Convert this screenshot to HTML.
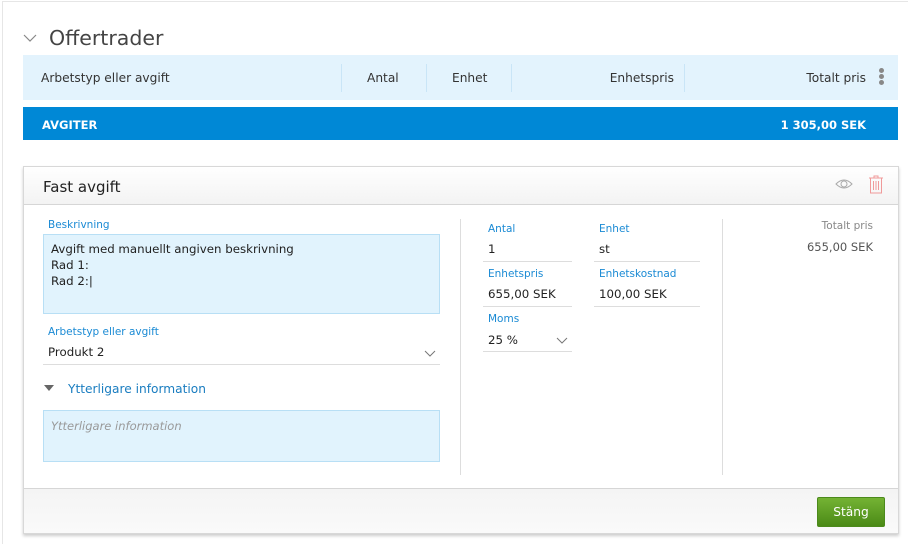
<!DOCTYPE html>
<html><head><meta charset="utf-8"><style>
*{box-sizing:border-box;margin:0;padding:0}
body{width:908px;height:544px;background:#fff;font-family:"DejaVu Sans","Liberation Sans",sans-serif;color:#333;position:relative;overflow:hidden;font-size:12.2px}
.a{position:absolute;white-space:nowrap}
.lbl{font-size:10.5px;color:#1a8ad4;line-height:13px}
.val{font-size:11.8px;color:#222;line-height:16px}
.ln{position:absolute;height:1px;background:#ddd}
</style></head><body>
<div class="a" style="left:2px;top:1px;width:906px;height:543px;border:1px solid #e6e6e6;border-right:none;border-bottom:none"></div>
<svg class="a" style="left:23px;top:33px" width="14" height="10"><path d="M1 2 L7 8 L13 2" fill="none" stroke="#888" stroke-width="1.2"/></svg>
<div class="a" style="left:49px;top:23px;font-size:20.5px;color:#444;line-height:30px">Offertrader</div>
<div class="a" style="left:23px;top:55px;width:875px;height:45px;background:#e3f3fd"></div>
<div class="a" style="left:341px;top:64px;width:1px;height:28px;background:#c9e5f7"></div>
<div class="a" style="left:426px;top:64px;width:1px;height:28px;background:#c9e5f7"></div>
<div class="a" style="left:511px;top:64px;width:1px;height:28px;background:#c9e5f7"></div>
<div class="a" style="left:684px;top:64px;width:1px;height:28px;background:#c9e5f7"></div>
<div class="a" style="left:41px;top:70px;line-height:16px">Arbetstyp eller avgift</div>
<div class="a" style="left:367px;top:70px;line-height:16px">Antal</div>
<div class="a" style="left:452px;top:70px;line-height:16px">Enhet</div>
<div class="a" style="right:234px;top:70px;line-height:16px">Enhetspris</div>
<div class="a" style="right:42px;top:70px;line-height:16px">Totalt pris</div>
<div class="a" style="left:879px;top:68px;width:5px;height:5px;border-radius:50%;background:#888;box-shadow:0 6px 0 #888,0 12px 0 #888"></div>
<div class="a" style="left:23px;top:107px;width:875px;height:33px;background:#0088d6"></div>
<div class="a" style="left:42px;top:117px;color:#fff;font-weight:bold;font-size:11.5px;line-height:16px">AVGITER</div>
<div class="a" style="right:42px;top:117px;color:#fff;font-weight:bold;font-size:11.5px;line-height:16px">1 305,00 SEK</div>
<div class="a" style="left:23px;top:166px;width:876px;height:368px;border:1px solid #d8d8d8;box-shadow:0 2px 3px rgba(0,0,0,.2);background:#fff"></div>
<div class="a" style="left:24px;top:167px;width:874px;height:38px;background:linear-gradient(#fff,#f3f3f3);border-bottom:1px solid #d6d6d6"></div>
<div class="a" style="left:43px;top:177px;font-size:15px;color:#222;line-height:20px">Fast avgift</div>
<svg class="a" style="left:835px;top:177px" width="18" height="14"><path d="M1 7 Q9 -1 17 7 Q9 15 1 7Z" fill="none" stroke="#aaa" stroke-width="1"/><circle cx="9" cy="7" r="3" fill="none" stroke="#aaa"/></svg>
<svg class="a" style="left:868px;top:175px" width="16" height="19"><path d="M1 3H15M6 3V1H10V3M2.5 3V18H13.5V3M5.5 6V15M8 6V15M10.5 6V15" fill="none" stroke="#f09a9a" stroke-width="1"/></svg>
<div class="a lbl" style="left:48px;top:219px">Beskrivning</div>
<div class="a" style="left:43px;top:234px;width:397px;height:80px;background:#e1f3fd;border:1px solid #b8dff5"></div>
<div class="a val" style="left:51px;top:241px;line-height:16px">Avgift med manuellt angiven beskrivning<br>Rad 1:<br>Rad 2:|</div>
<div class="a lbl" style="left:48px;top:326px">Arbetstyp eller avgift</div>
<div class="a val" style="left:48px;top:344px">Produkt 2</div>
<svg class="a" style="left:424px;top:350px" width="12" height="8"><path d="M1 1L6 6L11 1" fill="none" stroke="#777"/></svg>
<div class="ln" style="left:43px;top:364px;width:397px"></div>
<svg class="a" style="left:44px;top:385px" width="10" height="7"><path d="M0 0H10L5 6Z" fill="#666"/></svg>
<div class="a" style="left:68px;top:381px;color:#1a7dc0;line-height:16px">Ytterligare information</div>
<div class="a" style="left:43px;top:410px;width:397px;height:52px;background:#e1f3fd;border:1px solid #b8dff5"></div>
<div class="a" style="left:51px;top:419px;font-size:11.5px;color:#999;font-style:italic;line-height:14px">Ytterligare information</div>
<div class="a" style="left:460px;top:219px;width:1px;height:256px;background:#ddd"></div>
<div class="a" style="left:722px;top:219px;width:1px;height:256px;background:#ddd"></div>
<div class="a lbl" style="left:488px;top:223px">Antal</div>
<div class="a val" style="left:488px;top:241px">1</div>
<div class="ln" style="left:483px;top:261px;width:89px"></div>
<div class="a lbl" style="left:599px;top:223px">Enhet</div>
<div class="a val" style="left:599px;top:241px">st</div>
<div class="ln" style="left:594px;top:261px;width:106px"></div>
<div class="a lbl" style="left:488px;top:268px">Enhetspris</div>
<div class="a val" style="left:488px;top:286px">655,00 SEK</div>
<div class="ln" style="left:483px;top:306px;width:89px"></div>
<div class="a lbl" style="left:599px;top:268px">Enhetskostnad</div>
<div class="a val" style="left:599px;top:286px">100,00 SEK</div>
<div class="ln" style="left:594px;top:306px;width:106px"></div>
<div class="a lbl" style="left:488px;top:313px">Moms</div>
<div class="a val" style="left:488px;top:332px">25 %</div>
<svg class="a" style="left:556px;top:337px" width="12" height="8"><path d="M1 1L6 6L11 1" fill="none" stroke="#777"/></svg>
<div class="ln" style="left:483px;top:351px;width:89px"></div>
<div class="a" style="right:35px;top:220px;font-size:10.5px;color:#888;line-height:13px">Totalt pris</div>
<div class="a" style="right:35px;top:239px;font-size:11.5px;color:#555;line-height:16px">655,00 SEK</div>
<div class="a" style="left:24px;top:488px;width:874px;height:45px;background:linear-gradient(#f4f4f4,#fafafa);border-top:1px solid #d6d6d6"></div>
<div class="a" style="left:817px;top:497px;width:68px;height:30px;border-radius:2px;background:linear-gradient(#74b334,#4b8a16);border:1px solid #4c8a1c;color:#fff;text-align:center;line-height:28px">Stäng</div>
</body></html>
